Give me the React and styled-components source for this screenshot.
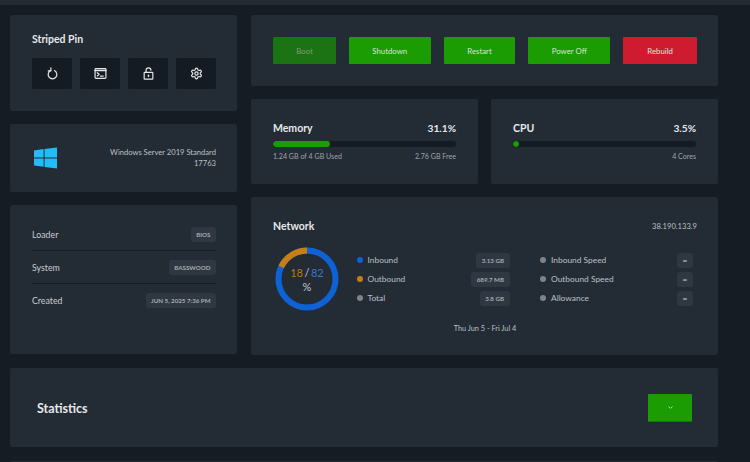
import React from 'react';
import styled, { createGlobalStyle } from 'styled-components';
import { ChevronDown } from 'lucide-react';

const GREEN = '#1a9c02';

const GlobalStyle = createGlobalStyle`
  html, body {
    margin: 0;
    padding: 0;
    background: #151c23;
    font-family: Lato, "Open Sans", sans-serif;
    overflow: hidden;
  }
  * { box-sizing: border-box; }
`;

const Page = styled.div`
  width: 750px;
  height: 462px;
  overflow: hidden;
`;
const TopStrip = styled.div`
  height: 5px;
  background: #232b35;
`;
const Main = styled.div`
  display: grid;
  grid-template-columns: 227px 467px;
  column-gap: 14px;
  padding: 10px 0 0 10px;
`;
const Column = styled.div`
  display: flex;
  flex-direction: column;
  gap: 13px;
`;
const Card = styled.section`
  background: #232b35;
  border-radius: 2px;
`;
const PinCard = styled(Card)`
  height: 95.5px;
  padding: 17px 21px 0 22px;
`;
const CardTitle = styled.h2`
  margin: 0;
  font-size: 10.5px;
  line-height: 14px;
  font-weight: 700;
  color: #e6e8ea;
`;
const IconRow = styled.div`
  display: flex;
  gap: 8px;
  margin-top: 12px;
`;
const IconButton = styled.button`
  width: 40px;
  height: 31px;
  display: flex;
  align-items: center;
  justify-content: center;
  padding: 0;
  border: 0;
  border-radius: 2px;
  background: #151b22;
  color: #e4e6e8;
`;
const OsCard = styled(Card)`
  height: 68px;
  padding: 0 21px 0 24px;
  display: flex;
  align-items: center;
  justify-content: space-between;
`;
const OsText = styled.div`
  font-size: 7.6px;
  line-height: 11px;
  text-align: right;
  color: #bcc0c4;
`;
const InfoCard = styled(Card)`
  height: 149.5px;
  padding: 12px 21px 0 22px;
`;
const InfoRow = styled.div`
  display: flex;
  align-items: center;
  justify-content: space-between;
  height: 33px;
  padding-top: 2px;
  border-top: ${p => (p.$first ? '0' : '1px solid #171d24')};
`;
const InfoLabel = styled.span`
  font-size: 8.8px;
  color: #c8ccd0;
`;
const Tag = styled.span`
  min-width: 16px;
  padding: 0 5.5px;
  height: 15px;
  line-height: 15px;
  text-align: center;
  border-radius: 3px;
  background: #2f3842;
  color: #a6abb0;
  font-size: 6.2px;
  font-weight: 700;
  white-space: nowrap;
`;
const ActionCard = styled(Card)`
  height: 71px;
  padding: 22px 21px 0 22px;
  display: flex;
  gap: 13px;
  align-items: flex-start;
`;
const ActionButton = styled.button`
  height: 27px;
  width: ${p => p.$w}px;
  padding: 0;
  border: 0;
  border-radius: 1px;
  background: ${p => (p.$danger ? '#cf1b2f' : p.$off ? '#1c7313' : GREEN)};
  color: ${p => (p.$off ? '#7f9c7b' : '#d9e6d6')};
  font: inherit;
  font-size: 7.8px;
`;
const GaugeRow = styled.div`
  display: grid;
  grid-template-columns: 227px 227px;
  column-gap: 13px;
`;
const GaugeCard = styled(Card)`
  height: 85px;
  padding: 22px 22px 0 22px;
`;
const SpreadRow = styled.div`
  display: flex;
  justify-content: space-between;
  align-items: center;
`;
const GaugeValue = styled.span`
  font-size: 10.2px;
  line-height: 14px;
  font-weight: 700;
  color: #e6e8ea;
`;
const Track = styled.div`
  height: 6px;
  margin: 6px 0 4px;
  border-radius: 3px;
  background: #151b22;
  overflow: hidden;
`;
const Fill = styled.div`
  height: 100%;
  border-radius: 3px;
  background: ${GREEN};
`;
const SmallNote = styled.span`
  font-size: 7.1px;
  line-height: 11px;
  color: #a0a5ab;
`;
const NetworkCard = styled(Card)`
  height: 158px;
  padding: 22px 21px 0 22px;
`;
const IpText = styled.span`
  font-size: 7.6px;
  color: #bcc0c4;
`;
const NetworkBody = styled.div`
  display: flex;
  align-items: center;
  margin-top: 14px;
`;
const Donut = styled.div`
  position: relative;
  width: 64px;
  height: 64px;
  margin-left: 2px;
  flex: none;
`;
const DonutLabel = styled.div`
  position: absolute;
  inset: 2px 0 0;
  display: flex;
  flex-direction: column;
  align-items: center;
  justify-content: center;
  font-size: 11px;
  line-height: 14px;
  color: #c4c8cc;
`;
const Orange = styled.span`
  color: #b8791d;
`;
const Blue = styled.span`
  color: #3a77c9;
`;
const Slash = styled.span`
  margin: 0 1.5px;
`;
const StatList = styled.div`
  display: flex;
  flex-direction: column;
  gap: 4px;
  width: ${p => p.$w}px;
  margin-left: ${p => p.$ml}px;
`;
const StatRow = styled.div`
  display: flex;
  align-items: center;
  height: 15px;
`;
const Dot = styled.i`
  width: 6px;
  height: 6px;
  border-radius: 50%;
  background: ${p => p.$color};
  margin-right: 5px;
`;
const StatLabel = styled.span`
  flex: 1;
  font-size: 8.4px;
  color: #bcc0c5;
`;
const DateRange = styled.div`
  margin-top: 13px;
  text-align: center;
  font-size: 7.3px;
  color: #bcc0c5;
`;
const StatsCard = styled(Card)`
  grid-column: 1 / 3;
  height: 79px;
  margin-top: 13px;
  padding: 0 26px 0 27px;
  display: flex;
  align-items: center;
  justify-content: space-between;
`;
const NextCard = styled(Card)`
  grid-column: 1 / 3;
  height: 30px;
  margin-top: 14px;
`;
const StatsTitle = styled.h2`
  margin: 2px 0 0;
  font-size: 12.5px;
  font-weight: 700;
  color: #e6e8ea;
`;
const ExpandButton = styled.button`
  width: 44px;
  height: 28px;
  display: flex;
  align-items: center;
  justify-content: center;
  padding: 0;
  border: 0;
  border-bottom: 1px solid #157a02;
  border-radius: 1px;
  background: ${GREEN};
  color: #e6efe4;
`;

const RestartIcon = () => (
  <svg width="13" height="13" viewBox="0 0 24 24" fill="none" stroke="currentColor" strokeWidth="2.2" strokeLinecap="round" strokeLinejoin="round">
    <path d="M8.5 6.6a8 8 0 1 0 7 0" />
    <path d="M9 1.5v5.6H4" />
  </svg>
);
const ConsoleIcon = () => (
  <svg width="13" height="13" viewBox="0 0 24 24" fill="none" stroke="currentColor" strokeWidth="2.2" strokeLinecap="round" strokeLinejoin="round">
    <rect x="2" y="3" width="20" height="18" rx="1.5" />
    <path d="M2 6.5h20" strokeWidth="3" />
    <path d="M6 10.5l3.5 3L6 16.5" />
    <path d="M12 17h5" />
  </svg>
);
const LockIcon = () => (
  <svg width="13" height="13" viewBox="0 0 24 24" fill="none" stroke="currentColor" strokeWidth="2.2" strokeLinecap="round" strokeLinejoin="round">
    <rect x="4" y="10" width="16" height="12.5" rx="1" />
    <path d="M7.5 10V6a4.5 4.5 0 0 1 9 0" />
    <path d="M12 15.5v1.5" strokeWidth="3" />
  </svg>
);
const GearIcon = () => (
  <svg width="13" height="13" viewBox="0 0 24 24" fill="none" stroke="currentColor" strokeWidth="2.2" strokeLinecap="round" strokeLinejoin="round">
    <path d="M12.22 2h-.44a2 2 0 0 0-2 2v.18a2 2 0 0 1-1 1.73l-.43.25a2 2 0 0 1-2 0l-.15-.08a2 2 0 0 0-2.73.73l-.22.38a2 2 0 0 0 .73 2.73l.15.1a2 2 0 0 1 1 1.72v.51a2 2 0 0 1-1 1.74l-.15.09a2 2 0 0 0-.73 2.73l.22.38a2 2 0 0 0 2.73.73l.15-.08a2 2 0 0 1 2 0l.43.25a2 2 0 0 1 1 1.73V20a2 2 0 0 0 2 2h.44a2 2 0 0 0 2-2v-.18a2 2 0 0 1 1-1.73l.43-.25a2 2 0 0 1 2 0l.15.08a2 2 0 0 0 2.73-.73l.22-.39a2 2 0 0 0-.73-2.73l-.15-.08a2 2 0 0 1-1-1.74v-.5a2 2 0 0 1 1-1.74l.15-.09a2 2 0 0 0 .73-2.73l-.22-.38a2 2 0 0 0-2.73-.73l-.15.08a2 2 0 0 1-2 0l-.43-.25a2 2 0 0 1-1-1.73V4a2 2 0 0 0-2-2z" />
    <circle cx="12" cy="12" r="3" />
  </svg>
);
const WindowsLogo = () => (
  <svg width="23" height="22" viewBox="0 0 24 22" fill="#22bdf8">
    <polygon points="0,3.2 10,1.7 10,10.6 0,10.6" />
    <polygon points="11,1.5 24,0 24,10.6 11,10.6" />
    <polygon points="0,11.5 10,11.5 10,20.2 0,18.8" />
    <polygon points="11,11.5 24,11.5 24,22 11,20.4" />
  </svg>
);

const NetDonut = () => {
  const r = 28.5;
  const c = 2 * Math.PI * r;
  return (
    <svg width="64" height="64" viewBox="0 0 64 64" fill="none">
      <circle cx="32" cy="32" r={r} stroke="#0f62d6" strokeWidth="6" />
      <circle
        cx="32"
        cy="32"
        r={r}
        stroke="#c67f14"
        strokeWidth="6"
        strokeDasharray={`${c * 0.18} ${c}`}
        transform="rotate(-154.8 32 32)"
      />
    </svg>
  );
};

const actions = [
  { label: 'Boot', w: 63, off: true },
  { label: 'Shutdown', w: 82 },
  { label: 'Restart', w: 72 },
  { label: 'Power Off', w: 82 },
  { label: 'Rebuild', w: 74, danger: true },
];
const info = [
  ['Loader', 'BIOS'],
  ['System', 'BASSWOOD'],
  ['Created', 'JUN 5, 2025 7:36 PM'],
];
const traffic = [
  ['Inbound', '3.13 GB', '#0f62d6'],
  ['Outbound', '689.7 MB', '#c67f14'],
  ['Total', '3.8 GB', '#7f8388'],
];
const speeds = ['Inbound Speed', 'Outbound Speed', 'Allowance'];

export default function App() {
  return (
    <Page>
      <GlobalStyle />
      <TopStrip />
      <Main>
        <Column>
          <PinCard>
            <CardTitle>Striped Pin</CardTitle>
            <IconRow>
              <IconButton><RestartIcon /></IconButton>
              <IconButton><ConsoleIcon /></IconButton>
              <IconButton><LockIcon /></IconButton>
              <IconButton><GearIcon /></IconButton>
            </IconRow>
          </PinCard>
          <OsCard>
            <WindowsLogo />
            <OsText>
              Windows Server 2019 Standard
              <br />
              17763
            </OsText>
          </OsCard>
          <InfoCard>
            {info.map(([label, value], i) => (
              <InfoRow key={label} $first={i === 0}>
                <InfoLabel>{label}</InfoLabel>
                <Tag>{value}</Tag>
              </InfoRow>
            ))}
          </InfoCard>
        </Column>
        <Column>
          <ActionCard>
            {actions.map(a => (
              <ActionButton key={a.label} $w={a.w} $off={a.off} $danger={a.danger}>
                {a.label}
              </ActionButton>
            ))}
          </ActionCard>
          <GaugeRow>
            <GaugeCard>
              <SpreadRow>
                <CardTitle>Memory</CardTitle>
                <GaugeValue>31.1%</GaugeValue>
              </SpreadRow>
              <Track><Fill style={{ width: '31.1%' }} /></Track>
              <SpreadRow>
                <SmallNote>1.24 GB of 4 GB Used</SmallNote>
                <SmallNote>2.76 GB Free</SmallNote>
              </SpreadRow>
            </GaugeCard>
            <GaugeCard>
              <SpreadRow>
                <CardTitle>CPU</CardTitle>
                <GaugeValue>3.5%</GaugeValue>
              </SpreadRow>
              <Track><Fill style={{ width: '3.5%' }} /></Track>
              <SpreadRow>
                <span />
                <SmallNote>4 Cores</SmallNote>
              </SpreadRow>
            </GaugeCard>
          </GaugeRow>
          <NetworkCard>
            <SpreadRow>
              <CardTitle>Network</CardTitle>
              <IpText>38.190.133.9</IpText>
            </SpreadRow>
            <NetworkBody>
              <Donut>
                <NetDonut />
                <DonutLabel>
                  <div><Orange>18</Orange><Slash>/</Slash><Blue>82</Blue></div>
                  <div>%</div>
                </DonutLabel>
              </Donut>
              <StatList $w={153} $ml={17.5}>
                {traffic.map(([label, value, color]) => (
                  <StatRow key={label}>
                    <Dot $color={color} />
                    <StatLabel>{label}</StatLabel>
                    <Tag>{value}</Tag>
                  </StatRow>
                ))}
              </StatList>
              <StatList $w={153} $ml={30.5}>
                {speeds.map(label => (
                  <StatRow key={label}>
                    <Dot $color="#7f8388" />
                    <StatLabel>{label}</StatLabel>
                    <Tag>∞</Tag>
                  </StatRow>
                ))}
              </StatList>
            </NetworkBody>
            <DateRange>Thu Jun 5 - Fri Jul 4</DateRange>
          </NetworkCard>
        </Column>
        <StatsCard>
          <StatsTitle>Statistics</StatsTitle>
          <ExpandButton><ChevronDown size={7} strokeWidth={2.5} /></ExpandButton>
        </StatsCard>
        <NextCard />
      </Main>
    </Page>
  );
}
